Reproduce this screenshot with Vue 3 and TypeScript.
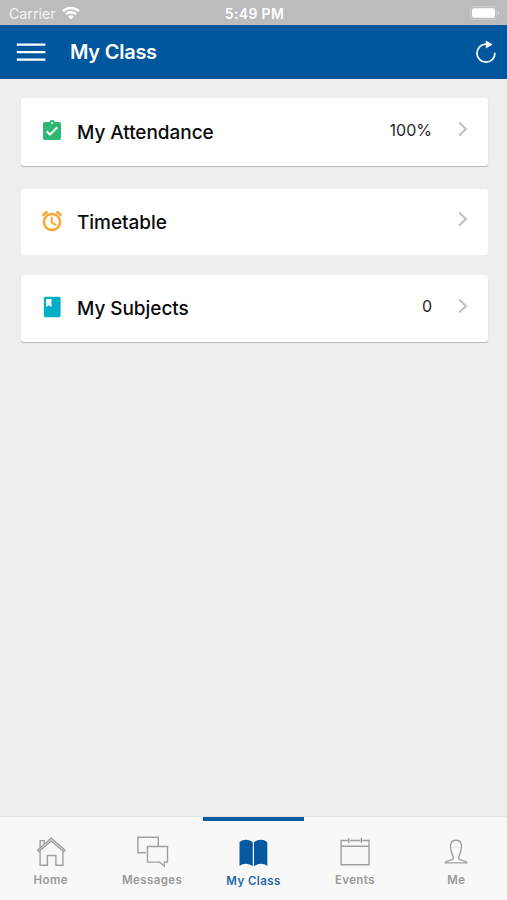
<script setup lang="ts">
type CardIcon = 'attendance' | 'timetable' | 'subjects'
type TabIcon = 'home' | 'messages' | 'class' | 'events' | 'me'

interface Card {
  icon: CardIcon
  title: string
  value?: string
}

interface Tab {
  icon: TabIcon
  label: string
}

const cards: Card[] = [
  { icon: 'attendance', title: 'My Attendance', value: '100%' },
  { icon: 'timetable', title: 'Timetable' },
  { icon: 'subjects', title: 'My Subjects', value: '0' },
]

const tabs: Tab[] = [
  { icon: 'home', label: 'Home' },
  { icon: 'messages', label: 'Messages' },
  { icon: 'class', label: 'My Class' },
  { icon: 'events', label: 'Events' },
  { icon: 'me', label: 'Me' },
]

const activeTab: TabIcon = 'class'
</script>

<template>
  <div class="screen">
    <div class="status">
      <div class="carrier">
        <span>Carrier</span>
        <svg class="wifi" width="18" height="14" viewBox="0 0 18 14" fill="none" stroke="#fff" stroke-width="2.5">
          <path d="M1 5.1A11.6 11.6 0 0 1 17 5.1" />
          <path d="M4 8.3A7.3 7.3 0 0 1 14 8.3" />
          <path d="M9 13.6 6.2 10.7A4 4 0 0 1 11.8 10.7Z" fill="#fff" stroke="none" />
        </svg>
      </div>
      <span class="time">5:49 PM</span>
      <svg class="battery" width="30" height="14" viewBox="0 0 30 14">
        <rect x=".6" y=".6" width="25.8" height="12.8" rx="3.6" fill="none" stroke="#cbcccd" stroke-width="1.1" />
        <rect x="2" y="2.2" width="23" height="9.6" rx="2.2" fill="#fff" />
        <path d="M27.8 4.8v4.4q1.6-.6 1.6-2.2t-1.6-2.2z" fill="#d3d4d5" />
      </svg>
    </div>

    <header class="header">
      <svg class="menu" width="30" height="20" viewBox="0 0 30 20" stroke="#fff" stroke-width="2.2">
        <path d="M.8 2.7h28.6M.8 10.2h28.6M.8 17.7h28.6" />
      </svg>
      <h1>My Class</h1>
      <svg class="refresh" width="22" height="24" viewBox="0 0 22 24">
        <path d="M12.4 4.200H11A9 9 0 1 0 19.900 12.800" fill="none" stroke="#fff" stroke-width="1.700" />
        <path d="M10.800.4 17.600 4.400 10.800 8.500Z" fill="#fff" />
      </svg>
    </header>

    <main class="content">
      <section v-for="card in cards" :key="card.icon" class="card" :class="card.icon">
        <svg v-if="card.icon === 'attendance'" class="card-icon" viewBox="0 0 24 24" fill="#2eb673">
          <path d="M19 3h-4.2C14.4 1.8 13.3 1 12 1s-2.4.8-2.8 2H5c-1.1 0-2 .9-2 2v14c0 1.1.9 2 2 2h14c1.1 0 2-.9 2-2V5c0-1.1-.9-2-2-2zm-7 0c.55 0 1 .45 1 1s-.45 1-1 1-1-.45-1-1 .45-1 1-1zm-2 14-4-4 1.41-1.41L10 14.17l6.59-6.59L18 9l-8 8z" />
        </svg>
        <svg v-else-if="card.icon === 'timetable'" class="card-icon" viewBox="0 0 24 24" fill="#f7a12b" stroke="#f7a12b" stroke-width=".4">
          <path d="M22 5.72l-4.6-3.86-1.29 1.53 4.6 3.86L22 5.72zM7.88 3.39 6.6 1.86 2 5.71l1.29 1.53 4.59-3.85zM12.5 8H11v6l4.75 2.85.75-1.23-4-2.37V8zM12 4c-4.97 0-9 4.03-9 9s4.02 9 9 9c4.97 0 9-4.03 9-9s-4.03-9-9-9zm0 16c-3.87 0-7-3.13-7-7s3.13-7 7-7 7 3.13 7 7-3.13 7-7 7z" />
        </svg>
        <svg v-else class="card-icon" viewBox="0 0 24 24">
          <rect x="3.8" y="1.8" width="16.8" height="20.4" rx="1.6" fill="#00afc5" />
          <path d="M6 4h5.500v8L8.750 10.200 6 12z" fill="#f4ffff" />
        </svg>
        <h2>{{ card.title }}</h2>
        <span v-if="card.value" class="value">{{ card.value }}</span>
        <svg class="chevron" width="10" height="16" viewBox="0 0 10 16" fill="none" stroke="#c2c2c4" stroke-width="2.200">
          <path d="M1.200 1.500 7.900 8 1.200 14.500" />
        </svg>
      </section>
    </main>

    <nav class="tabs">
      <div v-for="tab in tabs" :key="tab.icon" class="tab" :class="[tab.icon, { active: tab.icon === activeTab }]">
        <svg class="tab-icon" width="34" height="34" viewBox="0 0 34 34" fill="none" stroke="#a0a0a0" stroke-width="1.400">
          <template v-if="tab.icon === 'home'">
            <path d="M3.700 16.100 17.300 4.200 30.900 16.100 29.700 17.600 17.300 7 4.900 17.600Z" />
            <path d="M6.100 16.600V31.200H13.400V21.500H21.900V31.200H28.900V16.600M6.100 14V6.600H10.200V10.300" />
          </template>
          <template v-else-if="tab.icon === 'messages'">
            <path d="M11.200 18.800H2.900V3.300H23.300V12" />
            <path d="M12.500 12.500H32.500V28.100H29.300V32.100L24.600 28.100H12.500Z" />
          </template>
          <template v-else-if="tab.icon === 'class'">
            <path d="M16.800 7.300C13.400 3.900 6.900 3.900 3.500 7.200V31C7.400 27.900 12.900 27.900 16.800 31.300ZM18 7.300C21.400 3.900 27.900 3.900 31.300 7.200V31C27.400 27.900 21.900 27.900 18 31.300Z" fill="#0559a0" stroke="none" />
          </template>
          <template v-else-if="tab.icon === 'events'">
            <path d="M10 6.500H3.100V30.800H31V6.500H24.300M12 6.500H22.300M3.100 12.300H31M10.800 4V8.800M23.300 4V8.800" />
          </template>
          <template v-else>
            <path d="M6.200 28.900C6.400 26.200 14.300 26.700 14.500 24.300 14.500 22 12 19.500 12 15.600 11.300 13.500 11.400 10.700 12 9.500 13.200 5.200 20.800 5.200 22 9.500 22.600 10.700 22.700 13.500 22 15.600 22 19.500 19.500 22 19.500 24.300 19.700 26.700 27.600 26.200 27.800 28.900Z" />
          </template>
        </svg>
        <span class="label">{{ tab.label }}</span>
      </div>
    </nav>
  </div>
</template>

<style>
body {
  margin: 0;
}
</style>

<style scoped>
.screen {
  display: flex;
  flex-direction: column;
  width: 507px;
  height: 900px;
  overflow: hidden;
  background: #eee;
  font-family: Inter, "Liberation Sans", sans-serif;
}

svg {
  display: block;
  flex: none;
}

.status {
  display: grid;
  grid-template-columns: 1fr auto 1fr;
  align-items: center;
  box-sizing: border-box;
  height: 25px;
  padding: 2px 7px 0 9px;
  background: #babcbe;
  color: #fff;
}

.carrier {
  display: flex;
  align-items: center;
  gap: 6px;
  font-size: 14px;
  letter-spacing: 0.100px;
  color: #f5f5f6;
}

.wifi {
  margin-bottom: 2px;
}

.time {
  font-size: 14px;
  font-weight: 600;
  letter-spacing: 0.350px;
}

.battery {
  justify-self: end;
  margin-bottom: 2px;
}

.header {
  display: flex;
  align-items: center;
  box-sizing: border-box;
  height: 54px;
  padding: 0 10px 0 16px;
  background: #00579d;
  color: #fff;
}

.header h1 {
  flex: 1;
  margin: 0 0 0 24px;
  font-size: 20px;
  font-weight: 600;
  letter-spacing: -0.250px;
}

.content {
  flex: 1;
  display: flex;
  flex-direction: column;
  padding: 19px 19px 0 21px;
}

.card {
  display: flex;
  align-items: center;
  box-sizing: border-box;
  height: 68px;
  padding: 0 20px 0 19px;
  border-radius: 3px;
  background: #fff;
  box-shadow: 0 1px 1px #b5b5b5;
}

.timetable {
  height: 66px;
  margin: 23px 0 20px;
  box-shadow: none;
}

.subjects {
  height: 67px;
}

.card-icon {
  width: 24px;
  height: 24px;
  margin-bottom: 2px;
}

.subjects .card-icon {
  margin-bottom: 4px;
}

.card h2 {
  flex: 1;
  margin: 0 0 0 13px;
  font-size: 19px;
  font-weight: 500;
  letter-spacing: -0.060px;
  color: #0a0a0a;
}

.value {
  margin: 0 26px 5px 0;
  font-size: 16px;
  color: #252525;
}

.chevron {
  margin-bottom: 6px;
}

.tabs {
  display: grid;
  grid-template-columns: repeat(5, 1fr);
  box-sizing: border-box;
  height: 84px;
  border-top: 1px solid #dedfe0;
  background: #f8f8f8;
}

.tab {
  display: flex;
  flex-direction: column;
  align-items: center;
  padding-top: 17px;
  color: #999;
}

.label {
  margin-top: 4px;
  font-size: 11.500px;
  line-height: 16px;
  font-weight: 600;
  letter-spacing: 0.400px;
}

.active {
  padding-top: 14px;
  border-top: 4px solid #0559a0;
  color: #2868a6;
}
</style>
